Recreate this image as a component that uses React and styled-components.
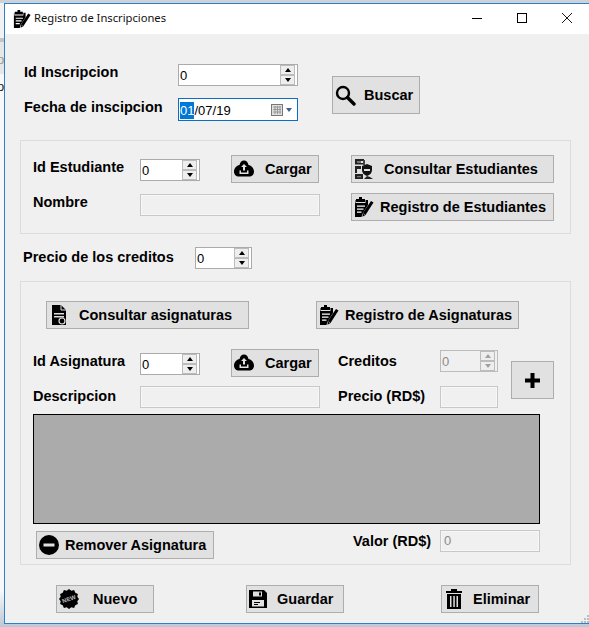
import styled, { createGlobalStyle } from "styled-components";

const GlobalStyle = createGlobalStyle`
  html, body {
    margin: 0;
    padding: 0;
    width: 589px;
    height: 627px;
    overflow: hidden;
    background: #c6ced6;
  }
`;

const Desk = styled.div`
  position: relative;
  width: 589px;
  height: 627px;
  overflow: hidden;
  padding: 3px 0 0 4px;
  box-sizing: border-box;
  background:
    linear-gradient(#cdd2d8 0 3px, transparent 3px),
    linear-gradient(#f2f2f2 0 38px, #c4c4c4 38px 42px, #e6e6e6 42px 74px, #f8f8f8 74px 590px, #bcc7d6 627px);
  font-family: "Liberation Sans", Arial, sans-serif;
`;
const Behind = styled.span`
  position: absolute;
  left: -3px;
  top: ${(p) => p.$y}px;
  font-size: 13px;
  line-height: 14px;
  color: ${(p) => p.$color};
`;
const Window = styled.div`
  position: relative;
  width: 586px;
  height: 621px;
  box-sizing: border-box;
  border: 1px solid #2f80c8;
  border-right: 0;
  background: #f0f0f0;
  color: #000;
`;
const TitleBar = styled.div`
  display: flex;
  align-items: center;
  height: 30px;
  padding-left: 8px;
  background: #fff;
`;
const Title = styled.span`
  margin-left: 3px;
  margin-top: -3px;
  font: 11.2px "Noto Sans", sans-serif;
  color: #111;
`;
const Controls = styled.div`
  display: flex;
  gap: 35px;
  margin-left: auto;
  margin-right: 18px;
  margin-top: -2px;
`;
const Body = styled.div`
  padding-top: 30px;
`;
const Top = styled.div`
  display: flex;
  padding-left: 19px;
`;
const Fields = styled.div`
  display: flex;
  flex-direction: column;
  gap: 12px;
`;
const Row = styled.div`
  display: flex;
  align-items: flex-start;
  margin-left: ${(p) => p.$left || 0}px;
  margin-top: ${(p) => p.$top || 0}px;
`;
const Label = styled.label`
  flex: none;
  width: ${(p) => p.$w}px;
  margin-top: ${(p) => p.$top || 0}px;
  margin-left: ${(p) => p.$left || 0}px;
  font-size: 14.5px;
  font-weight: 700;
  line-height: 17px;
  white-space: nowrap;
`;
const Group = styled.div`
  box-sizing: border-box;
  width: 551px;
  height: ${(p) => p.$h}px;
  margin-left: 15px;
  margin-top: ${(p) => p.$top}px;
  padding: ${(p) => p.$pad}px 0 0 12px;
  border: 1px solid #dcdcdc;
`;
const Spin = styled.div`
  flex: none;
  display: flex;
  box-sizing: border-box;
  width: ${(p) => p.$w}px;
  height: 22px;
  margin-top: ${(p) => p.$top || 0}px;
  padding: 1px 1px 1px 1px;
  border: 1px solid ${(p) => (p.$off ? "#bcbcbc" : "#ababab")};
  background: ${(p) => (p.$off ? "#f0f0f0" : "#fff")};
  color: ${(p) => (p.$off ? "#8b8b8b" : "#000")};
  font-size: 13px;
  line-height: 19px;
`;
const SpinValue = styled.span`
  flex: 1;
`;
const SpinButtons = styled.div`
  display: flex;
  flex-direction: column;
  justify-content: space-between;
  width: 15px;
  margin-right: 1px;
`;
const SpinButton = styled.div`
  display: flex;
  align-items: center;
  justify-content: center;
  height: 8px;
  border: 1px solid #bcbcbc;
  margin-top: -1px;
  margin-bottom: -1px;
  background: #eeeeee;
  &::before {
    content: "";
    border-left: 3px solid transparent;
    border-right: 3px solid transparent;
    border-${(p) => (p.$down ? "top" : "bottom")}: 4px solid ${(p) => (p.$off ? "#a0a0a0" : "#000")};
  }
`;
const DateBox = styled.div`
  display: flex;
  align-items: center;
  box-sizing: border-box;
  width: 120px;
  height: 23px;
  padding: 1px 0 0 1px;
  border: 1px solid #0a6fc2;
  background: #fff;
  font-size: 13px;
`;
const Selected = styled.span`
  background: #0078d7;
  color: #fff;
  line-height: 17px;
`;
const DateIcons = styled.span`
  display: flex;
  align-items: center;
  margin-left: auto;
  margin-right: 5px;
`;
const Input = styled.div`
  flex: none;
  box-sizing: border-box;
  width: ${(p) => p.$w}px;
  height: 22px;
  margin-top: ${(p) => p.$top || 0}px;
  padding-left: 3px;
  border: 1px solid #c8c8c8;
  box-shadow: inset 0 0 0 1px #f7f7f7;
  background: #f0f0f0;
  color: #8b8b8b;
  font-size: 13px;
  line-height: 20px;
`;
const Button = styled.button`
  flex: none;
  display: flex;
  align-items: center;
  gap: ${(p) => p.$gap}px;
  box-sizing: border-box;
  width: ${(p) => p.$w}px;
  height: ${(p) => p.$h || 28}px;
  margin-left: ${(p) => p.$left || 0}px;
  margin-top: ${(p) => p.$top || 0}px;
  padding: 0 0 0 ${(p) => p.$pad}px;
  border: 1px solid #adadad;
  border-radius: 0;
  background: #e1e1e1;
  color: #000;
  font: 700 14.5px "Liberation Sans", Arial, sans-serif;
  white-space: nowrap;
  svg {
    flex: none;
    display: block;
  }
`;
const Split = styled.div`
  display: flex;
  align-items: flex-start;
  margin-top: 20px;
`;
const Rows = styled.div`
  display: flex;
  flex-direction: column;
  gap: 9px;
`;
const DataGrid = styled.div`
  box-sizing: border-box;
  width: 507px;
  height: 110px;
  margin-top: 6px;
  border: 1px solid #000;
  background: #ababab;
`;
const Grip = styled.svg`
  position: absolute;
  right: 0;
  bottom: 3px;
`;

const Stepper = ({ w, top, off }) => (
  <Spin $w={w} $top={top} $off={off}>
    <SpinValue>0</SpinValue>
    <SpinButtons>
      <SpinButton $off={off} />
      <SpinButton $off={off} $down />
    </SpinButtons>
  </Spin>
);

const ClipboardIcon = ({ size = 20 }) => (
  <svg width={size} height={size} viewBox="0 0 20 20">
    <path d="M5 0h3v2h3v3H2V2h3zM1 3h.5v3h10V3H14v5l-5.500 8.500L7.500 20H1z" fill="#000" />
    <path d="M3 8.500h8v1.300H3zM3 11.500h6.500v1.300H3zM3 14.500h4.500v1.300H3z" fill="#fff" />
    <path d="M17 4l2.500 1.500-8 12.500-3 1.800.2-3.600z" fill="#000" />
    <path d="M9.600 16.800l1 .7" stroke="#fff" strokeWidth=".8" />
  </svg>
);
const SearchIcon = () => (
  <svg width="21" height="21" viewBox="0 0 21 21">
    <circle cx="8" cy="8" r="6" fill="none" stroke="#000" strokeWidth="2.400" />
    <path d="M12.500 12.500l6.500 6.500" stroke="#000" strokeWidth="3.400" strokeLinecap="round" />
  </svg>
);
const CloudIcon = () => (
  <svg width="20" height="20" viewBox="0 0 20 20">
    <path d="M10 1.500c2.500 0 4 2 4.500 4.500 3 .5 5.500 3.500 5.500 6.500 0 3-2 5-5 5H5c-3 0-5-2-5-5 0-3 2.500-6 5.500-6.500.5-2.500 2-4.500 4.500-4.500z" fill="#000" />
    <path d="M10 5l3 3h-2v3.500H9V8H7zM5.500 11.500H7V13.500h6v-2h1.500V15h-9z" fill="#e1e1e1" />
  </svg>
);
const StudentsIcon = () => (
  <svg width="20" height="21" viewBox="0 0 20 21">
    <path d="M1 0h9v2H3v2h6v1.500H1zM1 7h6v3H3v4H1zM1 15h8v5H1z" fill="#222" />
    <path d="M3 17h4v1.200H3zM3 2h4v2H3z" fill="#777" />
    <path d="M9 1h2v5H9z" fill="#444" />
    <path d="M8 7l5-2 5 2v4c0 3-2 5-5 6-3-1-5-3-5-6z" fill="#111" />
    <path d="M10 10h6v2h-6z" fill="#ddd" />
    <path d="M10 20l3-3 3 1 3 2z" fill="#222" />
  </svg>
);
const DocSearchIcon = () => (
  <svg width="14" height="20" viewBox="0 0 14 20">
    <path d="M0 0h9l5 5v15H0z" fill="#000" />
    <path d="M9 0v5h5" fill="none" stroke="#e1e1e1" />
    <path d="M2 8h10v1.500H2zM2 11h10v1.500H2z" fill="#ddd" />
    <circle cx="10" cy="16" r="3" fill="#000" stroke="#e1e1e1" strokeWidth="1.200" />
  </svg>
);
const MinusIcon = () => (
  <svg width="20" height="20" viewBox="0 0 20 20">
    <circle cx="10" cy="10" r="10" fill="#000" />
    <rect x="4.500" y="8.500" width="11" height="3" fill="#e1e1e1" />
  </svg>
);
const PlusIcon = () => (
  <svg width="15" height="15" viewBox="0 0 15 15">
    <path d="M5.500 0h4v5.500H15v4H9.500V15h-4V9.500H0v-4h5.500z" fill="#000" />
  </svg>
);
const NewIcon = () => (
  <svg width="20" height="20" viewBox="0 0 20 20">
    <path d="M10 0l2.300 1.700 2.800-.6 1.200 2.600 2.600 1.200-.6 2.800L20 10l-1.700 2.300.6 2.800-2.600 1.200-1.200 2.600-2.800-.6L10 20l-2.300-1.700-2.800.6-1.200-2.600-2.600-1.200.6-2.800L0 10l1.700-2.300-.6-2.800 2.600-1.200 1.200-2.600 2.800.6z" fill="#000" />
    <text x="10" y="12" fontSize="6" fontWeight="700" fill="#bbb" textAnchor="middle" fontFamily="Liberation Sans" transform="rotate(-20 10 10)">NEW</text>
  </svg>
);
const SaveIcon = () => (
  <svg width="18" height="18" viewBox="0 0 18 18">
    <path d="M0 0h15l3 3v15H0z" fill="#000" />
    <path d="M4 1.500h9v5H4zM3 10h12v6.500H3z" fill="#e1e1e1" />
    <path d="M10 2.500h2v3h-2zM5 12h6v1H5zM5 14h4v1H5z" fill="#000" />
  </svg>
);
const TrashIcon = () => (
  <svg width="16" height="20" viewBox="0 0 16 20">
    <path d="M5 0h6v2h5v2H0V2h5z" fill="#000" />
    <path d="M1 5h14v15H1z" fill="#000" />
    <path d="M4 7h1.500v11H4zM7.300 7h1.500v11H7.300zM10.500 7H12v11h-1.500z" fill="#e1e1e1" />
  </svg>
);
const CalendarIcon = () => (
  <svg width="21" height="12" viewBox="0 0 21 12">
    <rect x=".5" y=".5" width="11" height="11" fill="#e0e0e0" stroke="#777" />
    <path d="M2 3h8M2 5.500h8M2 8h8M4 2v8M6.500 2v8M9 2v8" stroke="#8a8a8a" strokeWidth=".8" />
    <path d="M15 4h6l-3 4z" fill="#3f5f88" />
  </svg>
);

export default function App() {
  return (
    <Desk>
      <GlobalStyle />
      <Behind $y={53} $color="#999">p</Behind>
      <Behind $y={80} $color="#222">o</Behind>
      <Window>
        <TitleBar>
          <ClipboardIcon size={18} />
          <Title>Registro de Inscripciones</Title>
          <Controls>
            <svg width="10" height="10" viewBox="0 0 10 10">
              <path d="M0 5.500h10" stroke="#000" />
            </svg>
            <svg width="10" height="10" viewBox="0 0 10 10">
              <rect x=".5" y=".5" width="9" height="9" fill="none" stroke="#000" />
            </svg>
            <svg width="10" height="10" viewBox="0 0 10 10">
              <path d="M0 0l10 10M10 0L0 10" stroke="#000" strokeWidth=".9" />
            </svg>
          </Controls>
        </TitleBar>
        <Body>
          <Top>
            <Fields>
              <Row>
                <Label $w={154}>Id Inscripcion</Label>
                <Stepper w={120} />
              </Row>
              <Row>
                <Label $w={154} $top={1}>Fecha de inscipcion</Label>
                <DateBox>
                  <Selected>01</Selected>/07/19
                  <DateIcons>
                    <CalendarIcon />
                  </DateIcons>
                </DateBox>
              </Row>
            </Fields>
            <Button $w={88} $h={38} $left={34} $top={12} $pad={2} $gap={8}>
              <SearchIcon />
              Buscar
            </Button>
          </Top>

          <Group $h={94} $top={19} $pad={14}>
            <Row>
              <Label $w={107} $top={4}>Id Estudiante</Label>
              <Stepper w={60} top={4} />
              <Button $w={88} $left={31} $pad={2} $gap={11}>
                <CloudIcon />
                Cargar
              </Button>
              <Button $w={203} $left={32} $pad={2} $gap={10}>
                <StudentsIcon />
                Consultar Estudiantes
              </Button>
            </Row>
            <Row $top={10}>
              <Label $w={107} $top={1}>Nombre</Label>
              <Input $w={180} $top={1} />
              <Button $w={203} $left={31} $pad={2} $gap={6}>
                <ClipboardIcon />
                Registro de Estudiantes
              </Button>
            </Row>
          </Group>

          <Row $left={18} $top={13}>
            <Label $w={172} $top={2}>Precio de los creditos</Label>
            <Stepper w={57} />
          </Row>

          <Group $h={284} $top={12} $pad={19}>
            <Row $left={13}>
              <Button $w={203} $pad={5} $gap={13}>
                <DocSearchIcon />
                Consultar asignaturas
              </Button>
              <Button $w={203} $left={67} $pad={2} $gap={6}>
                <ClipboardIcon />
                Registro de Asignaturas
              </Button>
            </Row>
            <Split>
              <Rows>
                <Row>
                  <Label $w={107} $top={4}>Id Asignatura</Label>
                  <Stepper w={60} top={4} />
                  <Button $w={88} $left={31} $pad={2} $gap={11}>
                    <CloudIcon />
                    Cargar
                  </Button>
                  <Label $w={102} $left={19} $top={4}>Creditos</Label>
                  <Stepper w={58} top={1} off />
                </Row>
                <Row>
                  <Label $w={107} $top={2}>Descripcion</Label>
                  <Input $w={180} />
                  <Label $w={102} $left={18} $top={2}>Precio (RD$)</Label>
                  <Input $w={58} />
                </Row>
              </Rows>
              <Button $w={43} $h={38} $left={13} $top={12} $pad={13} $gap={0}>
                <PlusIcon />
              </Button>
            </Split>
            <DataGrid />
            <Row $top={6}>
              <Button $w={178} $left={3} $top={1} $pad={2} $gap={6}>
                <MinusIcon />
                Remover Asignatura
              </Button>
              <Label $w={87} $left={139} $top={3}>Valor (RD$)</Label>
              <Input $w={100}>0</Input>
            </Row>
          </Group>

          <Row $left={51} $top={20}>
            <Button $w={98} $pad={2} $gap={14}>
              <NewIcon />
              Nuevo
            </Button>
            <Button $w={98} $left={92} $pad={2} $gap={10}>
              <SaveIcon />
              Guardar
            </Button>
            <Button $w={98} $left={97} $pad={4} $gap={11}>
              <TrashIcon />
              Eliminar
            </Button>
          </Row>
        </Body>
      </Window>
      <Grip width="9" height="9" viewBox="0 0 9 9">
        <path d="M7 0h2v2H7zM4 3h2v2H4zM7 3h2v2H7zM1 6h2v2H1zM4 6h2v2H4zM7 6h2v2H7z" fill="#bdbdbd" />
      </Grip>
    </Desk>
  );
}
